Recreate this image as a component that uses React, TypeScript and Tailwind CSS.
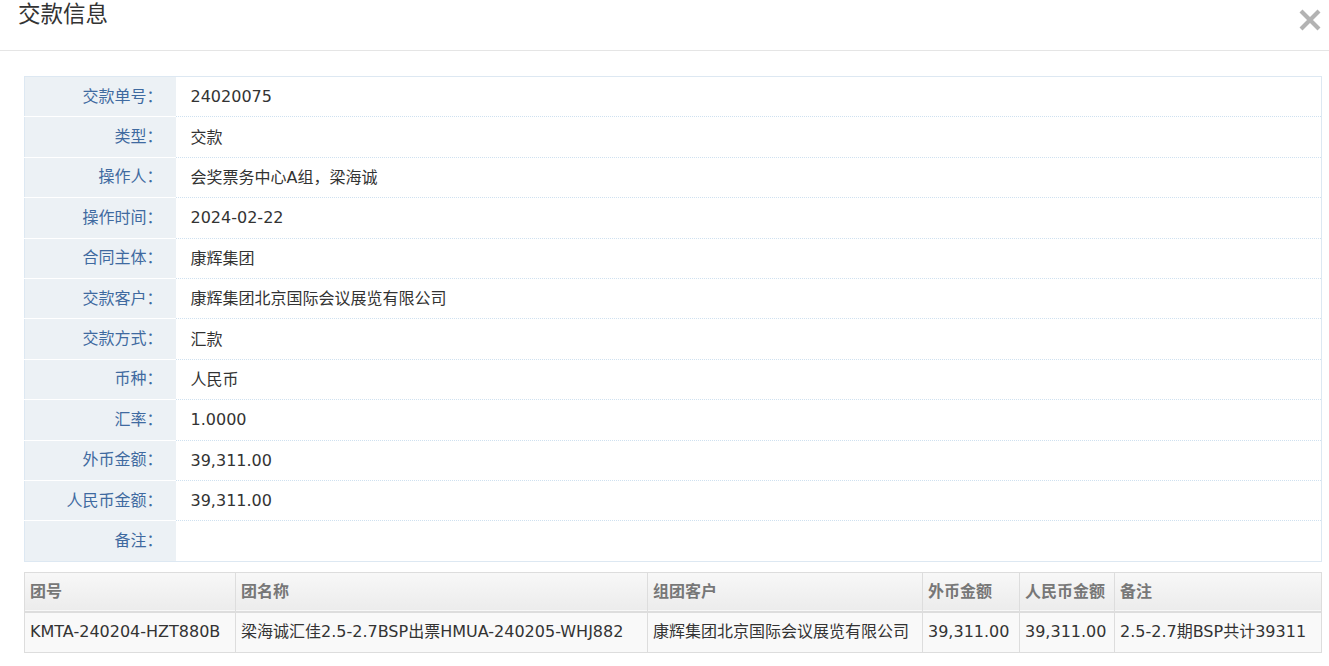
const font = { fontFamily: '"DejaVu Sans", "Noto Sans CJK SC", sans-serif' };

const info: [string, string][] = [
  ['交款单号', '24020075'],
  ['类型', '交款'],
  ['操作人', '会奖票务中心A组，梁海诚'],
  ['操作时间', '2024-02-22'],
  ['合同主体', '康辉集团'],
  ['交款客户', '康辉集团北京国际会议展览有限公司'],
  ['交款方式', '汇款'],
  ['币种', '人民币'],
  ['汇率', '1.0000'],
  ['外币金额', '39,311.00'],
  ['人民币金额', '39,311.00'],
  ['备注', ''],
];

const cols = [
  { title: '团号', w: 'w-[211px]', v: 'KMTA-240204-HZT880B' },
  { title: '团名称', w: 'w-[412px]', v: '梁海诚汇佳2.5-2.7BSP出票HMUA-240205-WHJ882' },
  { title: '组团客户', w: 'w-[275px]', v: '康辉集团北京国际会议展览有限公司' },
  { title: '外币金额', w: 'w-[97px]', v: '39,311.00' },
  { title: '人民币金额', w: 'w-[95px]', v: '39,311.00' },
  { title: '备注', w: '', v: '2.5-2.7期BSP共计39311' },
];

export default function App() {
  return (
    <div className="w-[1329px] h-[666px] bg-white overflow-hidden text-[16px]" style={font}>
      <div className="h-[51px] border-b border-[#e5e5e5] flex items-start justify-between pl-[18px] pr-[7px]">
        <h3 className="text-[22.5px] leading-[28px] text-[#333]">交款信息</h3>
        <button className="mt-[8px] text-[#b3b3b3]">
          <svg width="24" height="24" viewBox="0 0 24 24">
            <path d="M3 3 L21 21 M21 3 L3 21" stroke="currentColor" strokeWidth="4.2" strokeLinecap="butt" />
          </svg>
        </button>
      </div>

      <div className="px-[24px] pt-[25px]">
        <table className="w-[1298px] border border-[#dde8f2] border-collapse">
          <tbody>
            {info.map(([k, v], i) => (
              <tr key={k} className="h-[40.4px]">
                <td
                  className={`w-[151px] bg-[#ecf1f5] text-right pr-[13px] text-[#3f6aa0] ${
                    i < info.length - 1 ? 'border-b border-white' : ''
                  }`}
                >
                  {k}：
                </td>
                <td
                  className={`pl-[15px] pt-[1px] text-[#333] ${
                    i < info.length - 1 ? 'border-b border-dotted border-[#cfe1f0]' : ''
                  }`}
                >
                  {v}
                </td>
              </tr>
            ))}
          </tbody>
        </table>

        <table className="w-[1298px] mt-[10px] border border-[#dddddd] border-collapse">
          <thead>
            <tr className="h-[40px] bg-gradient-to-b from-[#f8f8f8] to-[#ececec] border-b-2 border-[#dddddd]">
              {cols.map((c) => (
                <th key={c.title} className={`${c.w} border border-[#dddddd] text-left font-bold text-[#777] px-[5px]`}>
                  {c.title}
                </th>
              ))}
            </tr>
          </thead>
          <tbody>
            <tr className="h-[40px] bg-[#f9f9f9]">
              {cols.map((c) => (
                <td key={c.title} className="border border-[#dddddd] px-[5px] text-[#333] whitespace-nowrap">
                  {c.v}
                </td>
              ))}
            </tr>
          </tbody>
        </table>
      </div>
    </div>
  );
}
